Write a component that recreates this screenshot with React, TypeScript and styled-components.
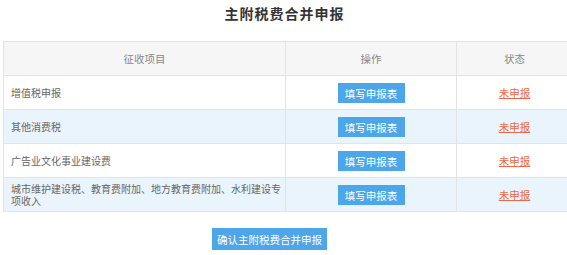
import React from 'react';
import styled, { createGlobalStyle } from 'styled-components';

const GlobalStyle = createGlobalStyle`
  body {
    margin: 0;
    background: #ffffff;
    font-family: "Microsoft YaHei", "Noto Sans CJK SC", "Noto Sans", sans-serif;
  }
`;

const Page = styled.div`
  width: 567px;
  height: 255px;
  overflow: hidden;
  display: flex;
  flex-flow: column;
  align-items: center;
`;

const Title = styled.h2`
  margin: 0;
  padding-top: 4px;
  height: 37px;
  font-size: 14px;
  line-height: 18px;
  font-weight: bold;
  letter-spacing: 1px;
  color: #333;
  align-self: center;
  padding-left: 2px;
`;

const Table = styled.table`
  align-self: flex-start;
  margin-left: 3px;
  width: 566px;
  border-collapse: collapse;
  table-layout: fixed;
  font-size: 10px;
  color: #555;
`;

const Th = styled.th<{ $w: number }>`
  width: ${p => p.$w}px;
  height: 33px;
  padding: 0;
  background: #f6f6f6;
  border: 1px solid #e3e3e3;
  font-weight: normal;
  color: #888;
  font-size: 10.5px;
`;

const Row = styled.tr<{ $alt?: boolean }>`
  height: 34px;
  background: ${p => (p.$alt ? '#eaf4fd' : '#ffffff')};
`;

const NameCell = styled.td`
  border: 1px solid #e3e3e3;
  padding: 0 3px 0 7px;
  line-height: 12px;
  font-size: 10px;
  color: #666;
`;

const CenterCell = styled.td`
  border: 1px solid #e3e3e3;
  text-align: center;
  padding: 0;
`;

const FillButton = styled.button`
  width: 67px;
  height: 20px;
  border: none;
  padding: 0;
  background: #4ea6ea;
  color: #fff;
  font-family: inherit;
  font-size: 10.5px;
  cursor: pointer;
  margin-top: 1px;
`;

const Status = styled.a`
  color: #ec6a43;
  text-decoration: underline;
  font-size: 10.5px;
  cursor: pointer;
`;

const Footer = styled.div`
  display: flex;
  justify-content: center;
  padding-top: 16px;
  padding-right: 28px;
`;

const ConfirmButton = styled.button`
  width: 115px;
  height: 22px;
  border: none;
  padding: 0;
  background: #4ea6ea;
  color: #fff;
  font-family: inherit;
  font-size: 10.5px;
  cursor: pointer;
`;

const items = [
  '增值税申报',
  '其他消费税',
  '广告业文化事业建设费',
  '城市维护建设税、教育费附加、地方教育费附加、水利建设专项收入',
];

const App: React.FC = () => {
  return (
    <>
      <GlobalStyle />
      <Page>
        <Title>主附税费合并申报</Title>
        <Table>
          <thead>
            <tr>
              <Th $w={281}>征收项目</Th>
              <Th $w={170}>操作</Th>
              <Th $w={115}>状态</Th>
            </tr>
          </thead>
          <tbody>
            {items.map((name, i) => (
              <Row key={name} $alt={i % 2 === 1}>
                <NameCell>{name}</NameCell>
                <CenterCell>
                  <FillButton>填写申报表</FillButton>
                </CenterCell>
                <CenterCell>
                  <Status>未申报</Status>
                </CenterCell>
              </Row>
            ))}
          </tbody>
        </Table>
        <Footer>
          <ConfirmButton>确认主附税费合并申报</ConfirmButton>
        </Footer>
      </Page>
    </>
  );
};

export default App;
